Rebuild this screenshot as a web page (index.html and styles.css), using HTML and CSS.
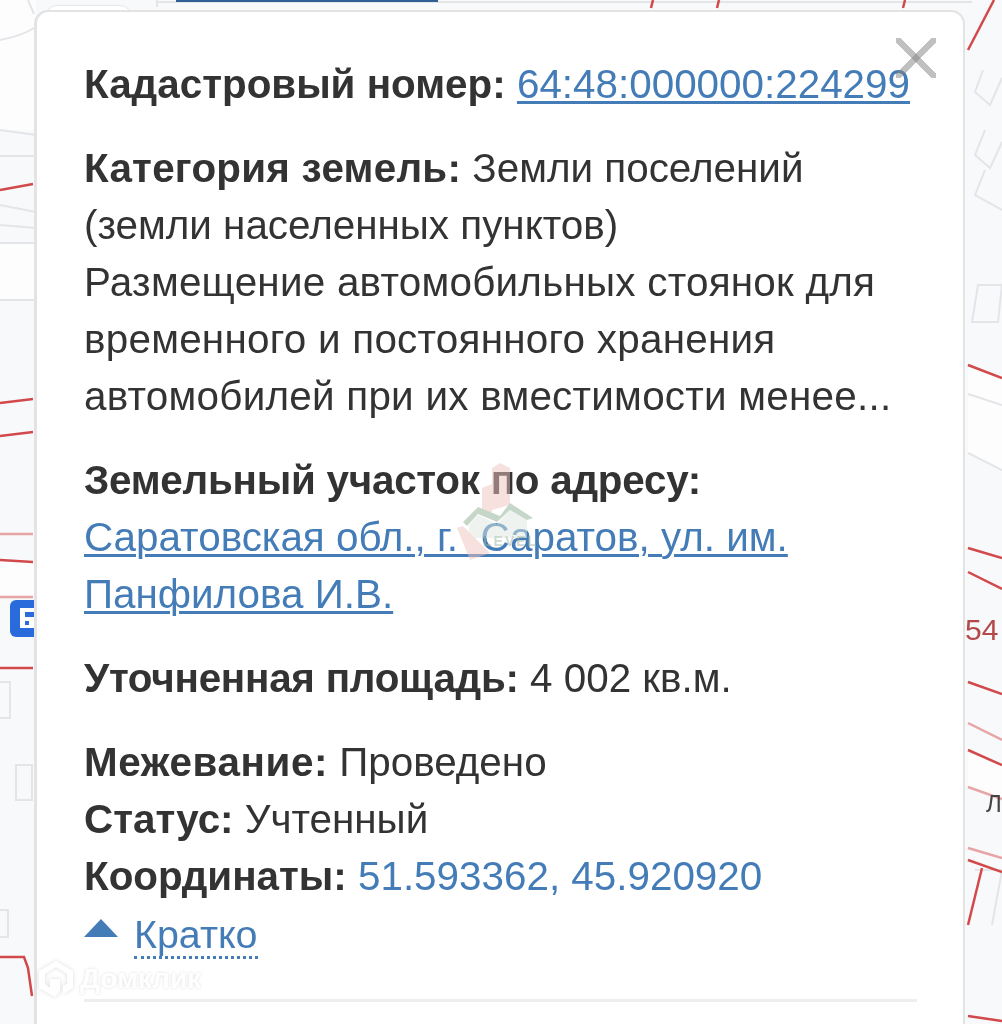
FILE: index.html
```html
<!DOCTYPE html>
<html lang="ru">
  <head>
    <meta charset="UTF-8" />
    <meta name="viewport" content="width=device-width, initial-scale=1.0" />
    <title>Кадастровый номер 64:48:000000:224299</title>
    <link rel="stylesheet" href="styles.css">
  </head>
  <body>
    <!-- map behind the popup -->
    <svg class="map" width="1002" height="1024" viewBox="0 0 1002 1024">
      <g class="band">
        <path d="M0 0H36V130H0Z" />
        <path d="M0 243H36V300H0Z" />
        <path d="M0 560H36V597H0Z" />
        <path d="M968 365L1002 378V470L968 452Z" />
        <path d="M968 750L1002 765V800L968 787Z" />
      </g>
      <g class="plot">
        <path d="M0 40C15 37 28 32 34 28M28 0L34 14" />
        <path d="M0 130L36 135M0 156H36" />
        <path d="M0 205L36 212M0 225L36 228M0 243H36" />
        <path d="M0 300H36" />
        <path d="M157 0V7M157 2H972" />
        <path d="M983 70L975 92L990 105L1002 78" />
        <path d="M985 130L975 155L990 168L1002 142" />
        <path d="M985 170L975 195L1002 210" />
        <path d="M978 285H1002L998 322H972Z" />
        <path d="M968 394L1002 405" />
        <path d="M968 453L1002 470" />
        <path d="M0 682H10V718H0" />
        <path d="M16 765H32V800H16Z" />
        <path d="M0 910H8V937H0" />
        <path d="M968 848L1002 858M975 870H1002L992 925" />
      </g>
      <g class="border">
        <path d="M0 190L33 184" />
        <path d="M0 403L33 399" />
        <path d="M0 436L33 432" />
        <path d="M0 560L33 562" />
        <path d="M0 668H33" />
        <path d="M0 957H24L28 968L32 996" />
        <path d="M653 0L651 8M719 0L717 8M905 0L903 8" />
        <path d="M994 0L968 50" />
        <path d="M968 365L1002 378" />
        <path d="M968 548L1002 558" />
        <path d="M968 572L1002 589" />
        <path d="M968 682L1002 694" />
        <path d="M968 750L1002 765" />
        <path d="M968 860L1002 872" />
        <path d="M982 868L968 925" />
        <path d="M968 1016L1002 1021" />
      </g>
      <g class="border faint">
        <path d="M0 534H33" />
        <path d="M0 597H33" />
        <path d="M968 723L1002 740" />
        <path d="M968 787L1002 799" />
        <path d="M968 848L1002 858" />
      </g>
      <rect class="road" x="176" y="0" width="262" height="2" />
      <text class="plot-number" x="965" y="640">54</text>
      <text class="street" x="986" y="812">Л</text>
      <rect class="stop" x="10" y="600" width="30" height="37" rx="6" />
      <rect class="stop-hole" x="20" y="608" width="20" height="20" />
      <rect class="stop-bar" x="25" y="612" width="15" height="5" />
      <rect class="stop-bar" x="25" y="621" width="4" height="4" />
    </svg>
    <div class="back-card"></div>

    <div class="popup">
      <div class="close"></div>

      <p><b>Кадастровый номер:</b> <a href="#">64:48:000000:224299</a></p>

      <p>
        <b class="wide">Категория земель:</b> Земли поселений<br />
        (земли населенных пунктов)<br />
        <span class="wide">Размещение автомобильных стоянок для<br />
        временного и постоянного хранения<br />
        автомобилей при их вместимости менее...</span>
      </p>

      <p>
        <b class="tight">Земельный участок по адресу:</b><br />
        <a href="#">Саратовская обл., г.&nbsp; Саратов, ул. им.<br />Панфилова И.В.</a>
      </p>

      <p><b class="tight">Уточненная площадь:</b> 4 002 кв.м.</p>

      <p class="details">
        <b class="wider">Межевание:</b> Проведено<br />
        <b>Статус:</b> Учтенный<br />
        <b>Координаты:</b> <span class="coords">51.593362, 45.920920</span>
      </p>

      <div class="toggle">
        <span class="arrow"></span>
        <span class="toggle-text">Кратко</span>
      </div>

      <div class="divider"></div>
    </div>

    <!-- watermarks over the picture -->
    <svg class="mark-level" width="90" height="105" viewBox="0 0 90 105">
      <path class="mark-pink" d="M37 8L45 3L55 8V45L37 50Z" />
      <path class="mark-pink" d="M27 28L37 24V52L27 55Z" />
      <path class="mark-wall" d="M14 65L23 55L42 64L55 50L72 60V78H14Z" />
      <path class="mark-green" d="M8 62L23 47L45 56L55 43L78 58L72 60L55 50L42 62L23 54L12 66Z" />
      <path class="mark-pink" d="M2 68L8 66L35 93L15 100Z" />
      <text class="mark-word" x="28" y="86">LEVEL</text>
    </svg>
    <div class="mark-domclick">
      <svg width="36" height="38" viewBox="0 0 36 38">
        <path d="M18 1L35 11V28L25 34V26L29 24V14L18 7L7 14V24L12 28V19H22V31L17 37L1 28V11Z" />
      </svg>
      <span>Домклик</span>
    </div>
  </body>
</html>
```

FILE: styles.css
```css
html,
body {
  height: 100%;
}
body {
  margin: 0;
  background-color: #f8f9fa;
  font-family: "Liberation Sans", Arial, sans-serif;
  overflow: hidden;
  position: relative;
}
.map {
  position: absolute;
  left: 0;
  top: 0;
  filter: blur(0.7px);
}
.band path {
  fill: #fdfdfd;
}
.plot path {
  fill: none;
  stroke: #e3e5e9;
  stroke-width: 2;
}
.border path {
  fill: none;
  stroke: #d2494c;
  stroke-width: 2.5;
}
.border.faint path {
  stroke: #e8a5a6;
}
.road {
  fill: #2f5f96;
}
.plot-number {
  font-size: 30px;
  fill: #b5484a;
}
.street {
  font-size: 24px;
  fill: #444;
}
.stop {
  fill: #2a6bdc;
}
.stop-hole {
  fill: #fff;
}
.stop-bar {
  fill: #2a6bdc;
}
.back-card {
  position: absolute;
  left: 45px;
  top: 5px;
  width: 85px;
  height: 30px;
  border-radius: 12px;
  background-color: white;
  border: 1px solid #e6e6e6;
}
.popup {
  position: relative;
  box-sizing: border-box;
  width: 931px;
  height: 1040px;
  margin: 10px 0 0 34px;
  padding: 44px 46px 0 47px;
  background-color: white;
  border: 2px solid #e3e3e4;
  border-left-width: 3px;
  border-radius: 14px;
  color: #333;
  font-size: 40.4px;
  line-height: 57px;
  filter: blur(0.5px);
}
.popup p {
  margin: 0 0 27px;
  white-space: nowrap;
}
.popup a {
  color: #447cb7;
  text-decoration: underline;
  text-decoration-thickness: 3px;
  text-underline-offset: 3px;
}
.wide {
  letter-spacing: 0.25px;
}
.wider {
  letter-spacing: 0.6px;
}
.tight {
  letter-spacing: -0.25px;
}
.details {
  margin-bottom: 0 !important;
}
.coords {
  color: #447cb7;
}
.close {
  position: absolute;
  right: 27px;
  top: 26px;
  width: 40px;
  height: 40px;
  background:
    linear-gradient(45deg, transparent 44%, rgba(130, 130, 130, 0.5) 44%, rgba(130, 130, 130, 0.5) 56%, transparent 56%),
    linear-gradient(-45deg, transparent 44%, rgba(130, 130, 130, 0.5) 44%, rgba(130, 130, 130, 0.5) 56%, transparent 56%);
}
.toggle {
  display: flex;
  align-items: center;
  gap: 16px;
  height: 57px;
  margin-top: 2px;
  font-size: 39.4px;
}
.arrow {
  width: 0;
  height: 0;
  border-left: 17px solid transparent;
  border-right: 17px solid transparent;
  border-bottom: 18px solid #447cb7;
  margin-bottom: 16px;
}
.toggle-text {
  color: #447cb7;
  line-height: 44px;
  border-bottom: 3px dotted #447cb7;
}
.divider {
  height: 3px;
  margin-top: 35px;
  background-color: #eeeeee;
}
.mark-level {
  position: absolute;
  left: 455px;
  top: 460px;
  opacity: 0.5;
}
.mark-pink {
  fill: #f0c4bf;
}
.mark-wall {
  fill: #dfe9e0;
}
.mark-green {
  fill: #8fae95;
}
.mark-word {
  font-size: 14px;
  font-weight: bold;
  letter-spacing: 2px;
  fill: #9db3a0;
}
.mark-domclick {
  position: absolute;
  left: 38px;
  top: 960px;
  display: flex;
  align-items: center;
  gap: 6px;
  color: white;
  font-size: 28px;
  font-weight: bold;
  text-shadow: 0 0 3px rgba(0, 0, 0, 0.14);
}
.mark-domclick svg {
  fill: white;
  filter: drop-shadow(0 0 2px rgba(0, 0, 0, 0.14));
}
```
